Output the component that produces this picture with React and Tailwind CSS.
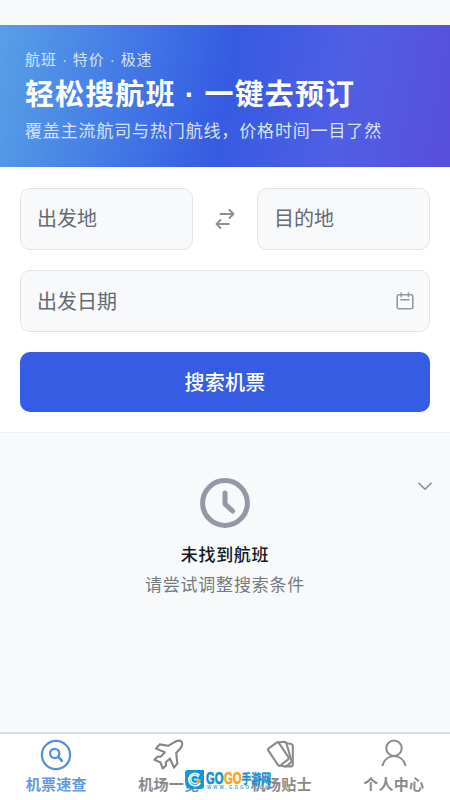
import { useState } from "react";

const SwapIcon = () => (
  <svg width="20" height="22" viewBox="0 0 20 22" fill="none" stroke="#8b8f96" strokeWidth="1.9" strokeLinecap="round" strokeLinejoin="round">
    <path d="M5.5 6H18.5M14.5 2L18.5 6L14.5 10" />
    <path d="M14 16H1.5M5.5 12L1.5 16L5.5 20" />
  </svg>
);

const CalendarIcon = () => (
  <svg width="18" height="18" viewBox="0 0 18 18" fill="none" stroke="#959aa4" strokeWidth="1.6" strokeLinecap="round" strokeLinejoin="round">
    <rect x="1.2" y="2.7" width="15.6" height="14" rx="1.5" />
    <path d="M5.2 1V4.6M12.4 1V4.6M4.8 7.8H13.2" />
  </svg>
);

const ClockIcon = () => (
  <svg width="50" height="50" viewBox="0 0 50 50" fill="none" stroke="#9299a5" strokeWidth="5" strokeLinecap="round" strokeLinejoin="round">
    <circle cx="25" cy="25" r="22.4" />
    <path d="M25 15V26L32.6 33" />
  </svg>
);

const SearchTabIcon = () => (
  <svg width="32" height="32" viewBox="0 0 32 32" fill="none" stroke="#5590d6" strokeWidth="2.3" strokeLinecap="round">
    <circle cx="16" cy="16" r="14.1" />
    <circle cx="14.7" cy="14.4" r="4.6" />
    <path d="M18.2 17.8L21.8 21.7" strokeWidth="2.7" />
  </svg>
);

const PlaneIcon = () => (
  <svg width="32" height="32" viewBox="0 0 32 32" fill="none" stroke="#858585" strokeWidth="2.1" strokeLinecap="round" strokeLinejoin="round">
    <path d="M15.2 6.8L20.6 3.6C23.6 1.7 27 1.2 28.4 2.6C29.8 4.2 29 7.4 26.8 10L23.2 14L24.4 24.6L21 28.6L17 19.6L12.8 23.2L13 26.4L9.8 29.6L7.4 23.4L1.4 20.8L4.4 17.8L7.8 17.6L11.8 13.2L3 9.6L6.6 5.4Z" />
  </svg>
);

const CardsIcon = () => (
  <svg width="32" height="32" viewBox="0 0 32 32" fill="none" stroke="#8b8b8b" strokeWidth="2.1" strokeLinejoin="round" strokeLinecap="round">
    <path d="M4 9.2L11.6 3.7Q13 2.7 14 4.1L23.4 18.2Q24.3 19.5 23.1 20.4L15.4 26.5Q14.1 27.5 13.1 26.1L3.4 11.6Q2.5 10.3 4 9.2Z" />
    <path d="M14 3.2L19.5 2.8Q20.8 2.8 21.3 4L26.4 21.5Q26.8 23 25.5 23.9L21.8 26.8Q20 28 16.3 26.8" />
    <path d="M21.5 4.2L26.3 5Q27.8 5.3 27.8 6.8V26Q27.8 27.4 26.4 27.4H20.5" />
  </svg>
);

const UserIcon = () => (
  <svg width="32" height="32" viewBox="0 0 32 32" fill="none" stroke="#8b8b8b" strokeWidth="2" strokeLinecap="round">
    <circle cx="16" cy="9.2" r="7.7" />
    <path d="M4.6 26.3C6.3 20.5 10.8 17 16 17S25.7 20.5 27.4 26.3" />
  </svg>
);

// narrow middle dot, the CJK one is full width
const Dot = () => <span className="font-['Liberation_Sans',sans-serif]">{" · "}</span>;

const tabs = [
  { label: "机票速查", icon: SearchTabIcon },
  { label: "机场一览", icon: PlaneIcon },
  { label: "机场贴士", icon: CardsIcon },
  { label: "个人中心", icon: UserIcon },
];

const fieldClass =
  "h-[62px] min-w-0 rounded-[10px] border border-[#e2e4e8] bg-[#f7f9fb] px-4 text-left text-[20px] text-[#656a73] placeholder:text-[#656a73] placeholder:opacity-100 outline-none";

export default function App() {
  const [from, setFrom] = useState("");
  const [to, setTo] = useState("");
  const [active, setActive] = useState(0);

  const swap = () => {
    setFrom(to);
    setTo(from);
  };

  return (
    <div className="relative flex h-[800px] w-[450px] flex-col overflow-hidden bg-[#f7f9fb] font-['Noto_Sans_CJK_SC',sans-serif]">

      <header className="mt-[25px] h-[142px] shrink-0 bg-[linear-gradient(100deg,#57a0e5_0%,#467fe6_24%,#355be2_50%,#505ee5_75%,#574fdc_100%)] pl-[25px] pt-6 whitespace-nowrap">
        <p className="h-5 text-[15px] leading-5 tracking-[0.9px] text-[#d5e4fa]">航班<Dot />特价<Dot />极速</p>
        <h1 className="mt-[3px] h-10 text-[29px] font-bold leading-10 tracking-[1.1px] text-white">轻松搜航班<Dot />一键去预订</h1>
        <p className="mt-[6px] h-6 text-[17px] leading-6 tracking-[0.85px] text-[#d9e3fb]">覆盖主流航司与热门航线，价格时间一目了然</p>
      </header>

      <section className="flex h-[266px] shrink-0 flex-col gap-5 border-b border-[#eff1f3] bg-white px-5 pt-[21px]">
        <div className="flex">
          <input className={`${fieldClass} w-[173px] pb-[3px]`} placeholder="出发地" value={from} onChange={(e) => setFrom(e.target.value)} />
          <button className="flex flex-1 items-center justify-center" onClick={swap}>
            <SwapIcon />
          </button>
          <input className={`${fieldClass} w-[173px] pb-[3px]`} placeholder="目的地" value={to} onChange={(e) => setTo(e.target.value)} />
        </div>
        <button className={`${fieldClass} flex items-center justify-between`}>
          <span>出发日期</span>
          <span className="-mr-px"><CalendarIcon /></span>
        </button>
        <button className="h-[60px] rounded-[10px] bg-[#355ce3] text-[20px] font-medium tracking-[0.3px] text-white">
          搜索机票
        </button>
      </section>

      <main className="relative flex flex-1 flex-col items-center pt-[44.5px]">
        <ClockIcon />
        <h2 className="mt-[14.5px] h-6 text-[17px] font-medium leading-6 tracking-[0.7px] text-[#15171f]">未找到航班</h2>
        <p className="mt-[6px] h-6 text-[17px] leading-6 tracking-[0.8px] text-[#737983]">请尝试调整搜索条件</p>
        <svg className="absolute right-[18px] top-[49px]" width="14" height="9" viewBox="0 0 14 9" fill="none" stroke="#8b8f96" strokeWidth="1.6" strokeLinecap="round" strokeLinejoin="round">
          <path d="M1 1.2L7 7.2L13 1.2" />
        </svg>
      </main>

      <nav className="grid h-[68px] shrink-0 grid-cols-4 border-t-2 border-[#d6dadd] bg-white">
        {tabs.map(({ label, icon: Icon }, i) => (
          <button key={label} onClick={() => setActive(i)} className="flex flex-col items-center pt-[5px]">
            <Icon />
            <span className={`mt-[3px] text-[15px] font-bold leading-5 tracking-[0.3px] ${i === active ? "text-[#6299de]" : "text-[#898989]"}`}>{label}</span>
          </button>
        ))}
      </nav>

      {/* site badge over the tab bar */}
      <div className="absolute left-[184px] top-[769px] flex items-start">
        <svg width="21" height="21" viewBox="0 0 21 21">
          <path d="M4 1H20V17Q20 20 17 20H7Q1 19 1 13V4Q1 1 4 1Z" fill="#1498d4" />
          <path d="M15.5 6.3A6.2 6.2 0 1 0 16.3 14" fill="none" stroke="#fff" strokeWidth="1.7" />
          <path d="M14.5 8A4.2 4.2 0 1 0 14.2 13Q16 11.2 13.8 10.5H10" fill="none" stroke="#d7f2ff" strokeWidth="1.5" />
          <path d="M11 10.5H17Q16.5 14.5 13 15Q15 12.5 11 10.5Z" fill="#f8a51d" />
        </svg>
        <svg className="ml-px overflow-visible" width="66" height="21" viewBox="0 0 66 21" fontWeight="bold">
          <g fontFamily="Liberation Sans, sans-serif" fontSize="17" strokeWidth=".7">
            <text x="0" y="15" textLength="17.5" lengthAdjust="spacingAndGlyphs" fill="#168fd0" stroke="#168fd0">GO</text>
            <text x="18" y="15" textLength="17.5" lengthAdjust="spacingAndGlyphs" fill="#f8a51d" stroke="#f8a51d">GO</text>
          </g>
          <text x="35.5" y="14" textLength="29.5" lengthAdjust="spacingAndGlyphs" fill="#168fd0" stroke="#168fd0" strokeWidth=".3" fontFamily="Noto Sans CJK SC, sans-serif" fontSize="13">手游网</text>
          <text x="1" y="20.3" textLength="62" fill="#4aa3d7" fontFamily="Liberation Sans, sans-serif" fontSize="4.5">WWW.GOGO.COM</text>
        </svg>
      </div>

    </div>
  );
}
